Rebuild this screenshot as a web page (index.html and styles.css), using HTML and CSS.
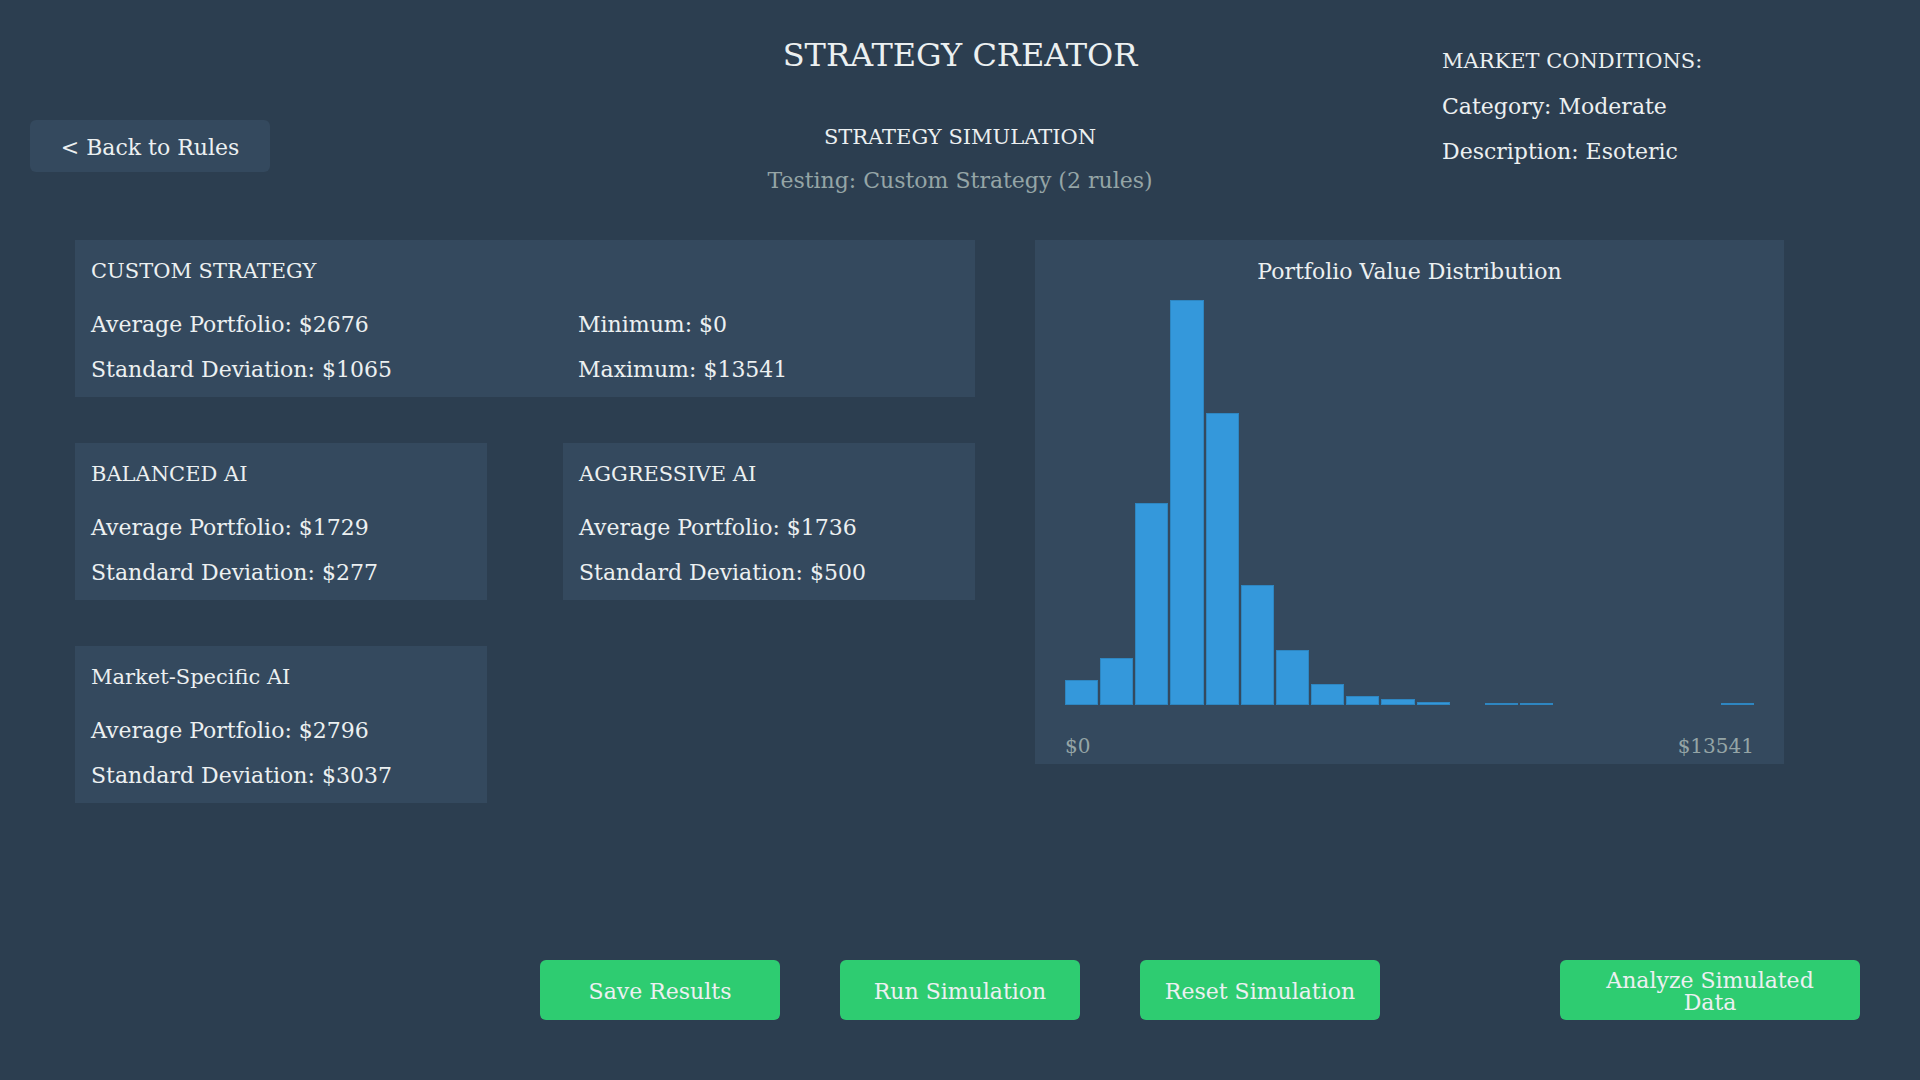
FILE: index.html
```html
<!DOCTYPE html>
<html lang="en">
<head>
    <meta charset="UTF-8">
    <meta name="viewport" content="width=device-width, initial-scale=1.0">
    <title>Strategy Creator</title>
    <link rel="stylesheet" href="styles.css">
</head>
<body>
    <header class="top-bar">
        <div class="top-left">
            <button class="back-btn">&lt; Back to Rules</button>
        </div>
        <div class="top-center">
            <h1 class="page-title">STRATEGY CREATOR</h1>
            <h2 class="sim-title">STRATEGY SIMULATION</h2>
            <p class="sim-subtitle">Testing: Custom Strategy (2 rules)</p>
        </div>
        <div class="top-right">
            <p class="market-heading">MARKET CONDITIONS:</p>
            <p class="market-line">Category: Moderate</p>
            <p class="market-line">Description: Esoteric</p>
        </div>
    </header>

    <main class="results">
        <div class="card-grid">
            <section class="card card-wide">
                <h3 class="card-title">CUSTOM STRATEGY</h3>
                <div class="stat-grid">
                    <p>Average Portfolio: $2676</p>
                    <p>Minimum: $0</p>
                    <p>Standard Deviation: $1065</p>
                    <p>Maximum: $13541</p>
                </div>
            </section>
            <section class="card">
                <h3 class="card-title">BALANCED AI</h3>
                <p>Average Portfolio: $1729</p>
                <p>Standard Deviation: $277</p>
            </section>
            <section class="card">
                <h3 class="card-title">AGGRESSIVE AI</h3>
                <p>Average Portfolio: $1736</p>
                <p>Standard Deviation: $500</p>
            </section>
            <section class="card">
                <h3 class="card-title">Market-Specific AI</h3>
                <p>Average Portfolio: $2796</p>
                <p>Standard Deviation: $3037</p>
            </section>
        </div>

        <section class="chart-panel">
            <h3 class="chart-title">Portfolio Value Distribution</h3>
            <div class="histogram">
                <div class="bar" style="height: 25px"></div>
                <div class="bar" style="height: 47px"></div>
                <div class="bar" style="height: 202px"></div>
                <div class="bar" style="height: 405px"></div>
                <div class="bar" style="height: 292px"></div>
                <div class="bar" style="height: 120px"></div>
                <div class="bar" style="height: 55px"></div>
                <div class="bar" style="height: 21px"></div>
                <div class="bar" style="height: 9px"></div>
                <div class="bar" style="height: 6px"></div>
                <div class="bar" style="height: 3px"></div>
                <div class="bar empty"></div>
                <div class="bar" style="height: 2px"></div>
                <div class="bar" style="height: 2px"></div>
                <div class="bar empty"></div>
                <div class="bar empty"></div>
                <div class="bar empty"></div>
                <div class="bar empty"></div>
                <div class="bar empty"></div>
                <div class="bar" style="height: 2px"></div>
            </div>
            <div class="axis-labels">
                <span>$0</span>
                <span>$13541</span>
            </div>
        </section>
    </main>

    <footer class="actions">
        <button class="action-btn">Save Results</button>
        <button class="action-btn">Run Simulation</button>
        <button class="action-btn">Reset Simulation</button>
        <button class="action-btn action-wide">Analyze Simulated Data</button>
    </footer>
</body>
</html>
```

FILE: styles.css
```css
/* Strategy simulation results screen */
* {
    margin: 0;
    padding: 0;
    box-sizing: border-box;
}

body {
    width: 1920px;
    height: 1080px;
    background-color: #2c3e50;
    color: #ecf0f1;
    font-family: Georgia, 'DejaVu Serif', serif;
    font-size: 22px;
    font-weight: normal;
    overflow: hidden;
}

h1, h2, h3 {
    font-weight: normal;
}

button {
    font-family: inherit;
    border: none;
    cursor: pointer;
}

/* Top bar: back button, titles, market info */
.top-bar {
    display: grid;
    grid-template-columns: 640px 640px 640px;
    height: 240px;
}

.top-left {
    padding: 120px 0 0 30px;
}

.back-btn {
    width: 240px;
    height: 52px;
    padding-top: 4px;
    line-height: 48px;
    font-size: 22px;
    color: #ecf0f1;
    background-color: #34495e;
    border-radius: 6px;
    text-align: center;
}

.top-center {
    padding-top: 37px;
    text-align: center;
}

.page-title {
    font-size: 32px;
    line-height: 36px;
    margin-bottom: 42px;
}

.sim-title {
    font-size: 21px;
    line-height: 44px;
}

.sim-subtitle {
    line-height: 44px;
    color: #95a5a6;
}

.top-right {
    padding: 39px 0 0 162px;
}

.market-heading {
    font-size: 21px;
    line-height: 45px;
}

.market-line {
    line-height: 45px;
}

/* Results area */
.results {
    display: grid;
    grid-template-columns: 900px 749px;
    column-gap: 60px;
    align-items: start;
    height: 720px;
    padding-left: 75px;
}

.card-grid {
    display: grid;
    grid-template-columns: 412px 412px;
    column-gap: 76px;
    row-gap: 46px;
}

.card {
    height: 157px;
    padding: 9px 16px 0;
    background-color: #34495e;
}

.card-wide {
    grid-column: span 2;
}

.card p {
    line-height: 45px;
}

.card-title {
    font-size: 21px;
    line-height: 45px;
    margin-bottom: 8px;
}

.stat-grid {
    display: grid;
    grid-template-columns: 487px auto;
}

/* Histogram */
.chart-panel {
    height: 524px;
    padding: 9px 30px 0;
    background-color: #34495e;
}

.chart-title {
    font-size: 22px;
    line-height: 45px;
    text-align: center;
}

.histogram {
    display: flex;
    align-items: flex-end;
    gap: 2px;
    height: 405px;
    margin-top: 6px;
}

.bar {
    flex: 1;
    background-color: #3498db;
    border: 1px solid #2e86c1;
}

.bar.empty {
    height: 0;
    border: none;
}

.axis-labels {
    display: flex;
    justify-content: space-between;
    margin-top: 26px;
    font-size: 20px;
    line-height: 30px;
    color: #95a5a6;
}

/* Bottom action buttons */
.actions {
    display: flex;
    gap: 60px;
    padding-left: 540px;
}

.action-btn {
    width: 240px;
    height: 60px;
    padding: 3px 4px 0;
    font-size: 22px;
    line-height: 22px;
    color: #ecf0f1;
    background-color: #2ecc71;
    border-radius: 6px;
    text-align: center;
}

.action-wide {
    width: 300px;
    padding: 3px 30px 0;
    margin-left: 120px;
}
```
